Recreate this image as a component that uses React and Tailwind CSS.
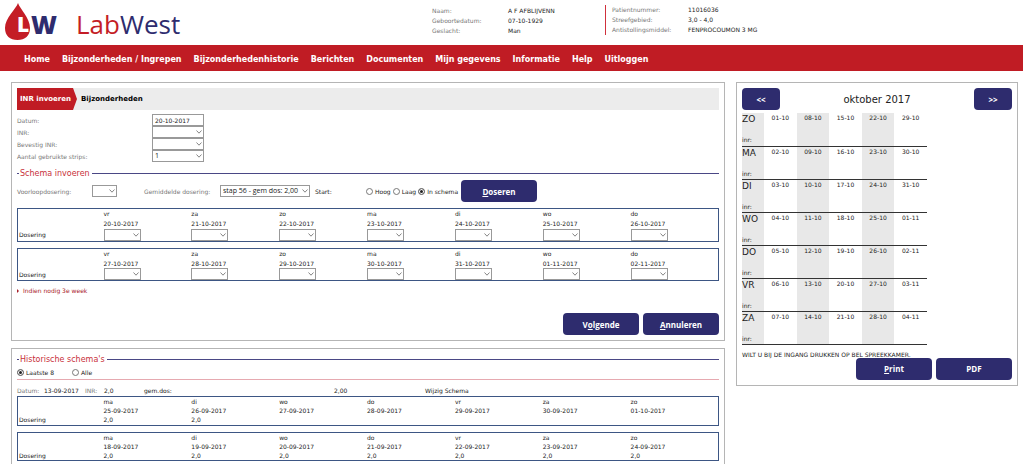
import { useState } from 'react'

const MENU = [
  'Home', 'Bijzonderheden / Ingrepen', 'Bijzonderhedenhistorie', 'Berichten', 'Documenten',
  'Mijn gegevens', 'Informatie', 'Help', 'Uitloggen',
]

const WEEKS = [
  [['vr', '20-10-2017'], ['za', '21-10-2017'], ['zo', '22-10-2017'], ['ma', '23-10-2017'], ['di', '24-10-2017'], ['wo', '25-10-2017'], ['do', '26-10-2017']],
  [['vr', '27-10-2017'], ['za', '28-10-2017'], ['zo', '29-10-2017'], ['ma', '30-10-2017'], ['di', '31-10-2017'], ['wo', '01-11-2017'], ['do', '02-11-2017']],
]

const HISTORY = [
  [['ma', '25-09-2017', '2,0'], ['di', '26-09-2017', '2,0'], ['wo', '27-09-2017', ''], ['do', '28-09-2017', ''], ['vr', '29-09-2017', ''], ['za', '30-09-2017', ''], ['zo', '01-10-2017', '']],
  [['ma', '18-09-2017', '2,0'], ['di', '19-09-2017', '2,0'], ['wo', '20-09-2017', '2,0'], ['do', '21-09-2017', '2,0'], ['vr', '22-09-2017', '2,0'], ['za', '23-09-2017', '2,0'], ['zo', '24-09-2017', '2,0']],
]

const CALENDAR = [
  ['ZO', '01-10', '08-10', '15-10', '22-10', '29-10'],
  ['MA', '02-10', '09-10', '16-10', '23-10', '30-10'],
  ['DI', '03-10', '10-10', '17-10', '24-10', '31-10'],
  ['WO', '04-10', '11-10', '18-10', '25-10', '01-11'],
  ['DO', '05-10', '12-10', '19-10', '26-10', '02-11'],
  ['VR', '06-10', '13-10', '20-10', '27-10', '03-11'],
  ['ZA', '07-10', '14-10', '21-10', '28-10', '04-11'],
]

function Logo() {
  return (
    <div className="flex items-center">
      <svg width="56" height="42" viewBox="0 0 56 42" role="img" aria-label="LW">
        <path d="M14 3C12 9 1 18 1 28c0 8 5 12 12.500 12S26 36 26 28C26 18 16 9 14 3z" fill="#c41d26" />
        <text x="13" y="32" fontSize="21" fontWeight="800" fontFamily="Open Sans, sans-serif" fill="#fff">L</text>
        <text x="27" y="34" fontSize="25" fontWeight="800" fontFamily="Open Sans, sans-serif" fill="#2e2c6e">W</text>
      </svg>
      <span className="ml-4 pt-[6px] font-['Open_Sans',sans-serif] text-[26px] leading-[36px] text-[#c41d26]">
        Lab<span className="text-[#2e2c6e]">West</span>
      </span>
    </div>
  )
}

function Info({ items }) {
  return (
    <dl className="grid grid-cols-[76px_auto] leading-[10px]">
      {items.map(([label, value]) => (
        <div key={label} className="contents">
          <dt className="text-[#777]">{label}</dt>
          <dd>{value}</dd>
        </div>
      ))}
    </dl>
  )
}

function Button({ className = 'w-[76px]', children }) {
  return (
    <button type="button" className={`h-[22px] shrink-0 rounded-[4px] bg-[#2e2c6e] text-center font-['Open_Sans',sans-serif] text-[8px] font-bold text-white ${className}`}>
      {children}
    </button>
  )
}

function Select({ className, value = '', ...props }) {
  return (
    <span className={`relative block h-[12px] ${className}`}>
      <select defaultValue={value} className="block size-full appearance-none border border-[#999] bg-white pl-[2px] font-['Open_Sans',sans-serif] text-[7px] leading-[10px] text-[#222]" {...props}>
        <option>{value}</option>
      </select>
      <svg className="pointer-events-none absolute top-[4px] right-[2px]" width="6" height="4" viewBox="0 0 6 4" fill="none" stroke="#666" strokeWidth="0.8">
        <path d="M0.5 0.5L3 3.2L5.5 0.5" />
      </svg>
    </span>
  )
}

function Radio({ label, ...props }) {
  return (
    <label className="flex items-center gap-[2px]">
      <input type="radio" className="size-[7px] appearance-none rounded-full border border-[#777] bg-white checked:bg-[#222] checked:shadow-[inset_0_0_0_1px_#fff]" {...props} />
      {label}
    </label>
  )
}

function Title({ children }) {
  return (
    <h2 className="flex h-[12px] items-center gap-px text-[8px] text-[#c8303a]">
      <span className="h-px w-[2px] bg-[#4a4785]" />
      {children}
      <span className="ml-px h-px flex-1 bg-[#4a4785]" />
    </h2>
  )
}

function DayTable({ days, rowClass, children }) {
  return (
    <table className="w-full table-fixed border border-[#3d5684] text-left">
      <thead>
        <tr className={rowClass}>
          <td className="w-[86px]" />
          {days.map(([day, date]) => <th key={date} scope="col" className="font-normal">{day}</th>)}
        </tr>
      </thead>
      <tbody>
        <tr className={rowClass}>
          <td />
          {days.map(([, date]) => <td key={date}>{date}</td>)}
        </tr>
        {children}
      </tbody>
    </table>
  )
}

export default function App() {
  const [start, setStart] = useState('In schema')
  const [range, setRange] = useState('Laatste 8')

  return (
    <div className="flex min-h-screen flex-col bg-white font-['DejaVu_Sans',sans-serif] text-[6px] leading-[9px] text-[#222]">
      <header className="flex h-[45px] items-start pl-1">
        <div className="w-[428px]"><Logo /></div>
        <div className="w-[173px] pt-[6px]">
          <Info items={[['Naam:', 'A F AFBLIJVENN'], ['Geboortedatum:', '07-10-1929'], ['Geslacht:', 'Man']]} />
        </div>
        <div className="mt-[5px] flex gap-[6px]">
          <span className="w-px bg-[#d0303c]" />
          <Info items={[['Patientnummer:', '11016036'], ['Streefgebied:', '3,0 - 4,0'], ['Antistollingsmiddel:', 'FENPROCOUMON 3 MG']]} />
        </div>
      </header>

      <nav className="flex h-[26px] items-center gap-3 bg-[#c01c24] pt-[3px] pl-6 text-[8px] font-bold text-white">
        {MENU.map(item => <a key={item} href="#">{item}</a>)}
      </nav>

      <div className="flex flex-1 gap-[11px] pt-[11px] pr-[5px] pl-[11px]">
        <main className="flex min-w-0 flex-1 flex-col gap-[7px]">
          <section className="border border-[#b5b5b5] p-[5px]">
            <div className="flex h-[22px] items-stretch bg-[#ececec] text-[7px] font-bold">
              <a href="#" className="flex w-[60px] items-center bg-[#c01c24] pl-[3px] whitespace-nowrap text-white [clip-path:polygon(0_0,56px_0,100%_50%,56px_100%,0_100%)]">INR invoeren</a>
              <a href="#" className="flex items-center pl-1 text-black">Bijzonderheden</a>
            </div>

            <div className="mt-1 grid auto-rows-[12px] grid-cols-[135px_52px] items-center text-[#777]">
              <label htmlFor="datum">Datum:</label>
              <input id="datum" defaultValue="20-10-2017" className="h-[12px] w-full border border-[#999] pl-[2px] text-[6px] text-[#222]" />
              <label htmlFor="inr">INR:</label>
              <Select id="inr" className="w-full" />
              <label htmlFor="bevestig">Bevestig INR:</label>
              <Select id="bevestig" className="w-full" />
              <label htmlFor="strips">Aantal gebruikte strips:</label>
              <Select id="strips" className="w-full" value="1" />
            </div>

            <div className="mt-[5px]"><Title>Schema invoeren</Title></div>

            <div className="mt-px flex h-[22px] items-center">
              <label htmlFor="voorloop" className="w-[75px] text-[#777]">Voorloopdosering:</label>
              <Select id="voorloop" className="w-[25px]" />
              <label htmlFor="gemiddeld" className="ml-[27px] w-[76px] text-[#777]">Gemiddelde dosering:</label>
              <Select id="gemiddeld" className="w-[90px]" value="stap 56 - gem dos: 2,00" />
              <span className="ml-[5px] w-[51px]">Start:</span>
              <div className="flex w-[95px] gap-[2px] whitespace-nowrap">
                {['Hoog', 'Laag', 'In schema'].map(s => (
                  <Radio key={s} name="start" label={s} checked={start === s} onChange={() => setStart(s)} />
                ))}
              </div>
              <Button><u>D</u>oseren</Button>
            </div>

            <div className="mt-[6px] flex flex-col gap-[6px]">
              {WEEKS.map((days, i) => (
                <DayTable key={i} days={days} rowClass="h-[10px]">
                  <tr className="h-[12px]">
                    <th scope="row" className="pl-[1px] font-normal">Dosering</th>
                    {days.map(([, date]) => (
                      <td key={date}><Select className="w-[37px]" aria-label={`Dosering ${date}`} /></td>
                    ))}
                  </tr>
                </DayTable>
              ))}
            </div>

            <a href="#" className="mt-[5px] flex items-center gap-1 text-[#a8202a]">
              <svg width="2" height="4" viewBox="0 0 2 4"><path d="M0 0L2 2L0 4z" fill="#a8202a" /></svg>
              Indien nodig 3e week
            </a>

            <div className="mt-[18px] flex justify-end gap-1">
              <Button>V<u>o</u>lgende</Button>
              <Button><u>A</u>nnuleren</Button>
            </div>
          </section>

          <section className="flex-1 border border-b-0 border-[#b5b5b5] px-[5px] pt-[4px]">
            <Title>Historische schema's</Title>
            <div className="mt-[2px] flex h-[10px] items-center gap-[18px]">
              {['Laatste 8', 'Alle'].map(r => (
                <Radio key={r} name="range" label={r} checked={range === r} onChange={() => setRange(r)} />
              ))}
            </div>
            <hr className="mt-[2px] h-px border-0 bg-[#e6a9b0]" />
            <div className="mt-1 flex h-[12px] items-center">
              <span className="w-[27px] text-[#777]">Datum:</span>
              <span className="w-[41px]">13-09-2017</span>
              <span className="w-[19px] text-[#777]">INR:</span>
              <span className="w-[40px]">2,0</span>
              <span className="w-[190px]">gem.dos:</span>
              <span className="w-[91px]">2,00</span>
              <a href="#">Wijzig Schema</a>
            </div>
            <div className="flex flex-col gap-[6px]">
              {HISTORY.map((days, i) => (
                <DayTable key={i} days={days} rowClass="h-[9px]">
                  <tr className="h-[10px]">
                    <th scope="row" className="pl-[1px] font-normal">Dosering</th>
                    {days.map(([, date, dose]) => <td key={date}>{dose}</td>)}
                  </tr>
                </DayTable>
              ))}
            </div>
          </section>
        </main>

        <aside className="w-[282px] shrink-0 self-start border border-[#b5b5b5] p-[5px]">
          <div className="flex items-center justify-between">
            <Button className="w-[38px]">&lt;&lt;</Button>
            <h2 className="text-[10px]">oktober 2017</h2>
            <Button className="w-[38px]">&gt;&gt;</Button>
          </div>
          <table className="mt-[3px] w-[185px] table-fixed">
            <colgroup>
              <col className="w-[22px] bg-[#e8e8e8]" />
              <col />
              <col className="bg-[#e8e8e8]" />
              <col />
              <col className="bg-[#e8e8e8]" />
              <col />
            </colgroup>
            <tbody>
              {CALENDAR.map(([day, ...dates]) => (
                <tr key={day} className="h-[33px] border-b border-[#333] align-top">
                  <th scope="row" className="text-left font-normal">
                    <div className="h-[22px] pt-[2px] text-[9px]">{day}</div>
                    <div className="h-[10px]">inr:</div>
                  </th>
                  {dates.map(date => <td key={date} className="text-center">{date}</td>)}
                </tr>
              ))}
            </tbody>
          </table>
          <p className="mt-[6px] leading-[7px]">WILT U BIJ DE INGANG DRUKKEN OP BEL SPREEKKAMER.</p>
          <div className="flex justify-end gap-1">
            <Button><u>P</u>rint</Button>
            <Button>PDF</Button>
          </div>
        </aside>
      </div>
    </div>
  )
}
